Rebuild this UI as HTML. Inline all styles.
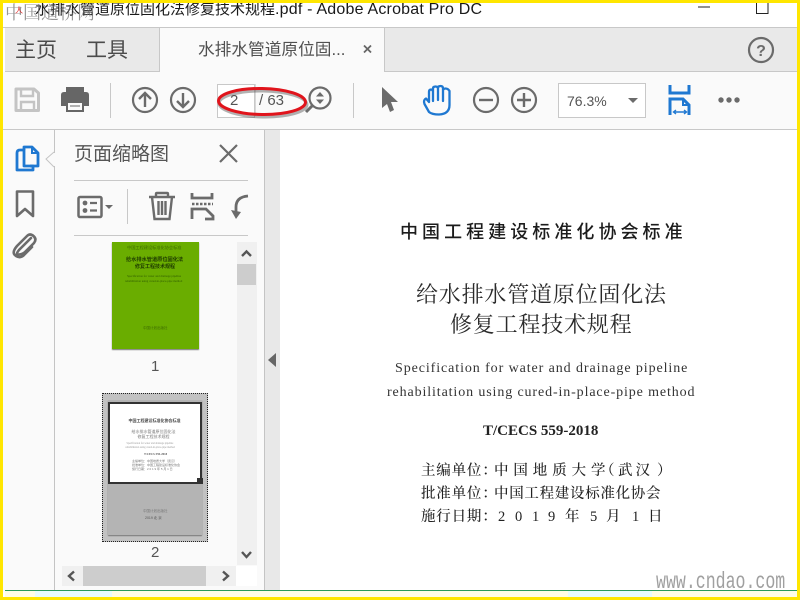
<!DOCTYPE html>
<html lang="zh"><head><meta charset="utf-8"><title>Acrobat</title>
<style>
html,body{margin:0;padding:0;width:800px;height:600px;overflow:hidden;background:#fff}
*{box-sizing:border-box}
.a{position:absolute}
.t{position:absolute;white-space:nowrap;line-height:1;font-family:"Liberation Sans","Noto Sans CJK SC",sans-serif}
.s{font-family:"Liberation Serif","Noto Serif CJK SC",serif}
.b{font-size:14.5px;color:#222;font-weight:500}
svg{position:absolute;left:0;top:0}
</style></head><body>
<div class="a" style="left:0;top:0;width:800px;height:600px;overflow:hidden;background:#fff">

<!-- title bar -->
<div class="t" style="left:35px;top:2px;font-size:15px;color:#1a1a1a">水排水管道原位固化法修复技术规程<span style="font-size:16px;letter-spacing:.2px">.pdf - Adobe Acrobat Pro DC</span></div>
<div class="t s" style="left:5px;top:4px;font-size:18px;color:#6a6a6a;opacity:.7">中国道桥网</div>
<div class="t" style="left:15px;top:7px;font-size:8px;color:#e02020">人</div>
<div class="a" style="left:3px;top:27px;width:794px;height:1px;background:#c8c8c8"></div>

<!-- tabs -->
<div class="a" style="left:5px;top:28px;width:792px;height:44px;background:#e9e9e9;border-bottom:1px solid #c8c8c8"></div>
<div class="a" style="left:159px;top:28px;width:226px;height:44px;background:#fafafa;border-left:1px solid #c8c8c8;border-right:1px solid #c8c8c8"></div>
<div class="t" style="left:15px;top:40px;font-size:21px;color:#4b4b4b">主页</div>
<div class="t" style="left:86px;top:40px;font-size:21px;color:#4b4b4b">工具</div>
<div class="t" style="left:198px;top:42px;font-size:16.7px;color:#505050">水排水管道原位固...</div>

<!-- toolbar -->
<div class="a" style="left:3px;top:72px;width:794px;height:58px;background:#fafafa;border-bottom:1px solid #c8c8c8"></div>
<div class="a" style="left:217px;top:84px;width:38px;height:34px;background:#fff;border:1px solid #c8c8c8"></div>
<div class="a" style="left:255px;top:84px;width:1px;height:32px;background:#d8d8d8"></div>
<div class="t" style="left:230px;top:93px;font-size:15px;color:#555">2</div>
<div class="t" style="left:259px;top:93px;font-size:15px;color:#555">/ 63</div>
<div class="a" style="left:110px;top:83px;width:1px;height:35px;background:#c8c8c8"></div>
<div class="a" style="left:353px;top:83px;width:1px;height:35px;background:#c8c8c8"></div>
<div class="a" style="left:558px;top:83px;width:88px;height:35px;background:#fff;border:1px solid #c8c8c8"></div>
<div class="t" style="left:567px;top:94px;font-size:14px;color:#555">76.3%</div>

<!-- side rail and panel -->
<div class="a" style="left:3px;top:130px;width:52px;height:460px;background:#fafafa;border-right:1px solid #c4c4c4"></div>
<div class="a" style="left:55px;top:130px;width:210px;height:460px;background:#fafafa;border-right:1px solid #c4c4c4"></div>
<div class="a" style="left:265px;top:130px;width:15px;height:460px;background:#e8e8e8"></div>
<div class="t" style="left:74px;top:145px;font-size:19px;color:#555">页面缩略图</div>
<div class="a" style="left:74px;top:180px;width:174px;height:1px;background:#c8c8c8"></div>
<div class="a" style="left:74px;top:235px;width:174px;height:1px;background:#c8c8c8"></div>
<div class="a" style="left:127px;top:189px;width:1px;height:35px;background:#c8c8c8"></div>

<!-- thumbnail 1 -->
<div class="a" style="left:112px;top:242px;width:87px;height:107px;background:#6aad00;box-shadow:0 1px 1px #777;overflow:hidden">
 <div class="t" style="left:15px;top:4px;font-size:4.2px;color:#3d6b00">中国工程建设标准化协会标准</div>
 <div class="t" style="left:14px;top:16px;font-size:5.2px;color:#1d3a00;font-weight:bold">给水排水管道原位固化法</div>
 <div class="t" style="left:23px;top:23px;font-size:5px;color:#1d3a00;font-weight:bold">修复工程技术规程</div>
 <div class="t s" style="left:15px;top:33px;font-size:3px;color:#2f5a00">Specification for water and drainage pipeline</div>
 <div class="t s" style="left:13px;top:38px;font-size:3px;color:#2f5a00">rehabilitation using cured-in-place-pipe method</div>
 <div class="t" style="left:31px;top:85px;font-size:3.5px;color:#3d6b00">中国计划出版社</div>
</div>
<div class="t" style="left:151px;top:359px;font-size:15px;color:#555">1</div>

<!-- thumbnail 2 -->
<div class="a" style="left:102px;top:393px;width:106px;height:149px;background:#c2c2c2;border:1px dotted #222"></div>
<div class="a" style="left:108px;top:400px;width:94px;height:135px;background:#b4b4b4;box-shadow:0 1px 1px #777"></div>
<div class="a" style="left:108px;top:402px;width:94px;height:82px;background:#fff;border:2.5px solid #333;overflow:hidden">
 <div class="t" style="left:18.500px;top:14.500px;font-size:4px;font-weight:bold;color:#444">中国工程建设标准化协会标准</div>
 <div class="t" style="left:21.500px;top:25.500px;font-size:4px;color:#777">给水排水管道原位固化法</div>
 <div class="t" style="left:27.500px;top:30.500px;font-size:4px;color:#777">修复工程技术规程</div>
 <div class="t s" style="left:16.500px;top:39px;font-size:2.6px;color:#999">Specification for water and drainage pipeline</div>
 <div class="t s" style="left:15.500px;top:43px;font-size:2.6px;color:#999">rehabilitation using cured-in-place-pipe method</div>
 <div class="t s" style="left:34px;top:49px;font-size:3px;color:#555;font-weight:bold">T/CECS 559-2018</div>
 <div class="t" style="left:22px;top:56px;font-size:3px;color:#777">主编单位：中国地质大学（武汉）</div>
 <div class="t" style="left:22px;top:60px;font-size:3px;color:#777">批准单位：中国工程建设标准化协会</div>
 <div class="t" style="left:22px;top:64px;font-size:3px;color:#777">施行日期：2 0 1 9 年 5 月 1 日</div>
</div>
<div class="a" style="left:197px;top:478px;width:6px;height:6px;background:#333"></div>
<div class="t" style="left:143px;top:510px;font-size:3.500px;color:#777">中国计划出版社</div>
<div class="t" style="left:145px;top:517px;font-size:3.500px;color:#555">2019 北 京</div>
<div class="t" style="left:151px;top:545px;font-size:15px;color:#555">2</div>

<!-- scrollbars -->
<div class="a" style="left:237px;top:242px;width:20px;height:323px;background:#f0f0f0"></div>
<div class="a" style="left:237px;top:264px;width:19px;height:21px;background:#cdcdcd"></div>
<div class="a" style="left:62px;top:566px;width:174px;height:20px;background:#f0f0f0"></div>
<div class="a" style="left:83px;top:566px;width:123px;height:20px;background:#cdcdcd"></div>
<div class="a" style="left:236px;top:566px;width:21px;height:20px;background:#fff"></div>

<!-- document -->
<div class="t" style="left:400px;top:223px;font-size:18px;letter-spacing:4.05px;font-weight:500;color:#1c1c1c">中国工程建设标准化协会标准</div>
<div class="t s" style="left:416px;top:284px;font-size:22px;letter-spacing:.8px;color:#2a2a2a">给水排水管道原位固化法</div>
<div class="t s" style="left:450px;top:314px;font-size:22px;letter-spacing:.8px;color:#2a2a2a">修复工程技术规程</div>
<div class="t s" style="left:395px;top:362px;font-size:14px;letter-spacing:.91px;color:#333">Specification for water and drainage pipeline</div>
<div class="t s" style="left:387px;top:386px;font-size:14px;letter-spacing:.88px;color:#333">rehabilitation using cured-in-place-pipe method</div>
<div class="t s" style="left:483px;top:424px;font-size:15px;font-weight:bold;color:#222">T/CECS 559-2018</div>

<div class="t s b" style="left:421px;top:464px;letter-spacing:.8px">主编单位：</div>
<div class="t s b" style="left:494px;top:464px;letter-spacing:4.9px">中国地质大学</div>
<div class="t s b" style="left:600px;top:464px">（</div>
<div class="t s b" style="left:618px;top:464px">武</div>
<div class="t s b" style="left:635.500px;top:464px">汉</div>
<div class="t s b" style="left:657px;top:464px">）</div>

<div class="t s b" style="left:421px;top:487px;letter-spacing:.8px">批准单位：</div>
<div class="t s b" style="left:494px;top:487px;letter-spacing:.7px">中国工程建设标准化协会</div>

<div class="t s b" style="left:421px;top:510px;letter-spacing:.8px">施行日期：</div>
<div class="t s b" style="left:498px;top:510px">2</div>
<div class="t s b" style="left:515px;top:510px">0</div>
<div class="t s b" style="left:532px;top:510px">1</div>
<div class="t s b" style="left:548px;top:510px">9</div>
<div class="t s b" style="left:565px;top:510px">年</div>
<div class="t s b" style="left:590px;top:510px">5</div>
<div class="t s b" style="left:606px;top:510px">月</div>
<div class="t s b" style="left:632px;top:510px">1</div>
<div class="t s b" style="left:648px;top:510px">日</div>

<div class="t" style="left:656px;top:571px;font-family:'Liberation Mono',monospace;font-size:23px;color:#a0a0a0;transform:scaleX(.72);transform-origin:0 0">www.cndao.com</div>

<!-- icons -->
<svg width="800" height="600" viewBox="0 0 800 600" fill="none">
 <!-- window controls -->
 <path d="M698 7H710" stroke="#222" stroke-width="1"/>
 <path d="M756.500 3V13.500H768V3" stroke="#222" stroke-width="1"/>
 <!-- tab close -->
 <path d="M364 45.500L371 52.500M371 45.500L364 52.500" stroke="#666" stroke-width="1.800"/>
 <!-- help -->
 <circle cx="761" cy="50" r="12" stroke="#6b6b6b" stroke-width="2.200"/>
 <text x="761" y="56" text-anchor="middle" font-family="Liberation Sans,sans-serif" font-weight="bold" font-size="16" fill="#6b6b6b">?</text>
 <!-- save -->
 <path d="M16 89H34L38.500 93V110.500H16Z" stroke="#c4c4c4" stroke-width="3" stroke-linejoin="round"/>
 <path d="M21 89V96H33V89M21 110V102H34V110" stroke="#c4c4c4" stroke-width="2.400"/>
 <!-- print -->
 <path d="M66 93V87H84V93" fill="#666"/>
 <path d="M64 92H86Q89 92 89 95V106H83V103H67V106H61V95Q61 92 64 92Z" fill="#666"/>
 <rect x="67" y="102" width="16" height="9" fill="#fafafa" stroke="#666" stroke-width="2"/>
 <path d="M70 106H80" stroke="#666" stroke-width="1"/>
 <!-- up/down -->
 <circle cx="145" cy="100" r="12" stroke="#6b6b6b" stroke-width="2.200"/>
 <path d="M145 107V93M139 99L145 93L151 99" stroke="#6b6b6b" stroke-width="2.400"/>
 <circle cx="183" cy="100" r="12" stroke="#6b6b6b" stroke-width="2.200"/>
 <path d="M183 93V107M177 101L183 107L189 101" stroke="#6b6b6b" stroke-width="2.400"/>
 <!-- magnifier page nav -->
 <circle cx="320" cy="98" r="10.500" stroke="#6b6b6b" stroke-width="2.200"/>
 <path d="M320 92L324 96.500H316ZM320 104L324 99.500H316Z" fill="#6b6b6b"/>
 <path d="M312 106L306 112" stroke="#6b6b6b" stroke-width="3"/>
 <!-- red ellipse -->
 <ellipse cx="263" cy="104" rx="44" ry="13" stroke="#555" stroke-width="3" opacity=".45" transform="rotate(1 263 104)"/>
 <ellipse cx="262" cy="101.500" rx="43.500" ry="13" stroke="#e0141c" stroke-width="3" transform="rotate(1 262 101.500)"/>
 <!-- cursor -->
 <path d="M382 87L382 108L387 104L390 112L394 110L391 102L398 102Z" fill="#6b6b6b"/>
 <!-- hand -->
 <path d="M429 112L424.500 104Q423 100 426 98.500L429 102V92Q429 89.500 431 89.500T433 92V88.500Q433 86.500 435.500 86.500T438 88.500V88Q438 86 440.500 86T443 88.500V90.500Q443 88.500 445.500 88.500T449.500 91V105Q449.500 114 439 114.500Q432 114.500 429 112ZM433 92V101M438 88.500V100M443 90.500V101" stroke="#1f78d1" stroke-width="2.300" stroke-linejoin="round" stroke-linecap="round"/>
 <!-- zoom -->
 <circle cx="486" cy="100" r="12" stroke="#6b6b6b" stroke-width="2.200"/>
 <path d="M479 100H493" stroke="#6b6b6b" stroke-width="2.400"/>
 <circle cx="524" cy="100" r="12" stroke="#6b6b6b" stroke-width="2.200"/>
 <path d="M517 100H531M524 93V107" stroke="#6b6b6b" stroke-width="2.400"/>
 <path d="M628 98H638L633 103Z" fill="#6b6b6b"/>
 <!-- fit width -->
 <path d="M670 85V93H689V85" stroke="#1f78d1" stroke-width="3"/>
 <path d="M670 115V99H683L689 105V115" stroke="#1f78d1" stroke-width="3"/>
 <path d="M683 99V105H689" stroke="#1f78d1" stroke-width="2"/>
 <path d="M674 112H686M676 110L673.500 112L676 114M684 110L686.500 112L684 114" stroke="#1f78d1" stroke-width="1.400"/>
 <!-- dots -->
 <circle cx="721" cy="100" r="2.700" fill="#6b6b6b"/><circle cx="729" cy="100" r="2.700" fill="#6b6b6b"/><circle cx="737" cy="100" r="2.700" fill="#6b6b6b"/>
 <!-- rail: pages -->
 <path d="M24 150V147H32L38 153V166H30" stroke="#1f78d1" stroke-width="2.800" stroke-linejoin="round"/>
 <path d="M24 150H20Q17 150 17 153V170H33V166H24V150Z" stroke="#1f78d1" stroke-width="2.800" stroke-linejoin="round"/>
 <path d="M32 147V153H38" stroke="#1f78d1" stroke-width="2"/>
 <!-- rail: notch -->
 <path d="M54 152L46 159L54 167" fill="#fafafa" stroke="#c4c4c4"/>
 <path d="M55 153V166" stroke="#fafafa" stroke-width="2"/>
 <!-- rail: bookmark -->
 <path d="M17 191.500H33V216L25 209L17 216Z" stroke="#6b6b6b" stroke-width="2.600" stroke-linejoin="round"/>
 <!-- rail: clip -->
 <path d="M31 240L19 252Q15 257 19 256.500T25 254L34 245Q37 241 33.500 238T27 238L17 248Q11 255 16 258T25 256L32 249" stroke="#6b6b6b" stroke-width="2.600" stroke-linecap="round" transform="translate(0,-2)"/>
 <!-- panel close -->
 <path d="M220 145L237 162M237 145L220 162" stroke="#6b6b6b" stroke-width="2.200"/>
 <!-- thumbnail options -->
 <rect x="78.500" y="197" width="23" height="20" rx="1.500" stroke="#6b6b6b" stroke-width="2.500"/>
 <circle cx="85" cy="203" r="2.400" fill="#6b6b6b"/><circle cx="85" cy="210.500" r="2.400" fill="#6b6b6b"/>
 <path d="M90 203H97M90 210.500H97" stroke="#6b6b6b" stroke-width="2.200"/>
 <path d="M105 205H113L109 209Z" fill="#6b6b6b"/>
 <!-- trash -->
 <path d="M149 197H175M156 197V194Q156 193 157 193H167Q168 193 168 194V197M152 197L154.500 219H169.500L172 197M158.500 201V215M162 201V215M165.500 201V215" stroke="#6b6b6b" stroke-width="2.400"/>
 <!-- insert pages -->
 <path d="M192 193V198H212V193" stroke="#6b6b6b" stroke-width="2.800"/>
 <path d="M192 204H213" stroke="#6b6b6b" stroke-width="2.600" stroke-dasharray="2.500 1.500"/>
 <path d="M192 219V209H206L213 216V219H205" stroke="#6b6b6b" stroke-width="2.800"/>
 <!-- rotate -->
 <path d="M248 196Q236 197 236 207V213" stroke="#6b6b6b" stroke-width="2.800"/>
 <path d="M231 210L241 212L236 219Z" fill="#6b6b6b"/>
 <!-- scrollbar arrows -->
 <path d="M242 256L246.500 251.500L251 256" stroke="#555" stroke-width="2.400"/>
 <path d="M242 552L246.500 557L251 552" stroke="#555" stroke-width="2.400"/>
 <path d="M74 571.500L69 576L74 580.500" stroke="#555" stroke-width="2.400"/>
 <path d="M223 571.500L228 576L223 580.500" stroke="#555" stroke-width="2.400"/>
 <!-- collapse arrow -->
 <path d="M276 353V367L268 360Z" fill="#666"/>
</svg>

<!-- bottom strip -->
<div class="a" style="left:5px;top:590px;width:792px;height:1px;background:#2a9a5a"></div>
<div class="a" style="left:5px;top:591px;width:792px;height:6px;background:#fffde6"></div>
<div class="a" style="left:35px;top:591px;width:77px;height:6px;background:#e8fbfd"></div>
<div class="a" style="left:568px;top:591px;width:84px;height:6px;background:#e8fbfd"></div>

<!-- yellow frame -->
<div class="a" style="left:0;top:0;width:800px;height:3px;background:#ffe600"></div>
<div class="a" style="left:0;top:597px;width:800px;height:3px;background:#ffe600"></div>
<div class="a" style="left:0;top:0;width:3px;height:600px;background:#ffe600"></div>
<div class="a" style="left:797px;top:0;width:3px;height:600px;background:#ffe600"></div>
</div>
</body></html>
